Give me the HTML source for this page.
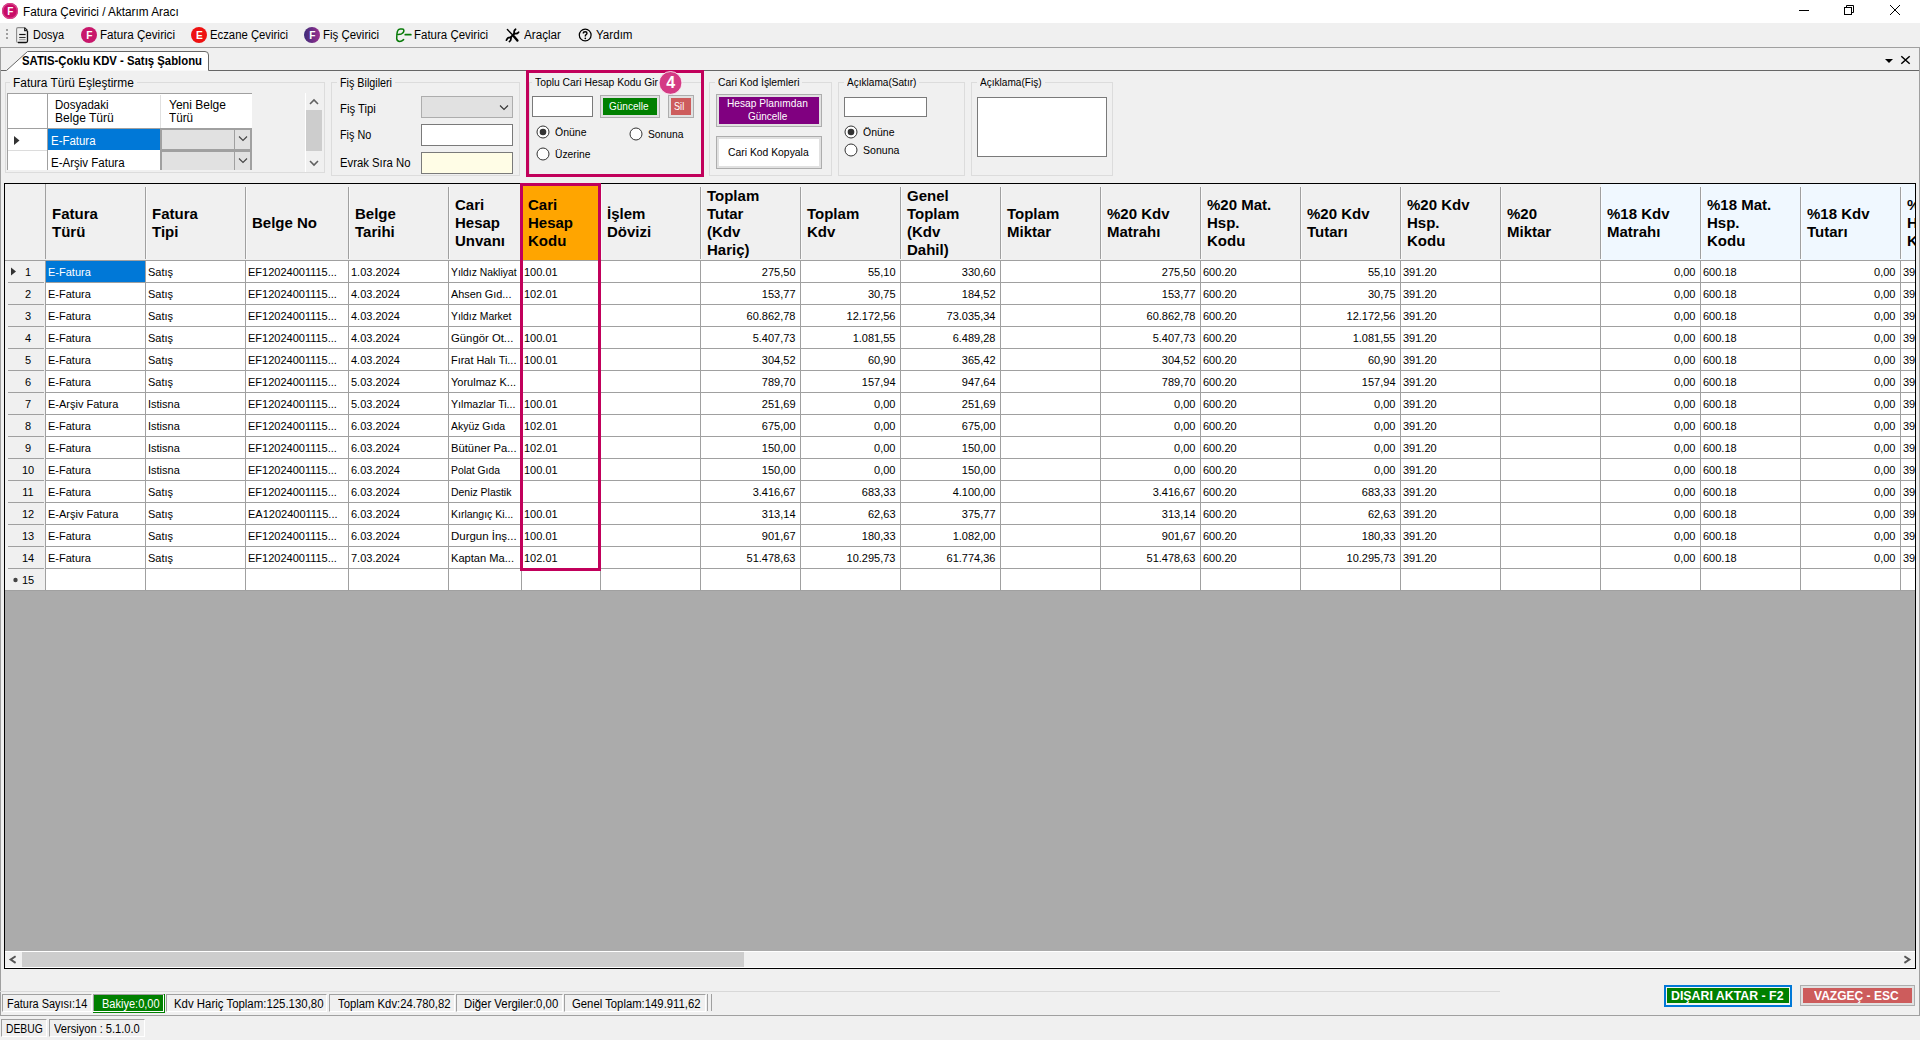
<!DOCTYPE html>
<html><head><meta charset="utf-8"><title>Fatura Çevirici</title>
<style>
html,body{margin:0;padding:0;}
body{width:1920px;height:1040px;overflow:hidden;background:#f0f0f0;position:relative;font-family:'Liberation Sans', sans-serif;color:#000;}
body>div,body>span,body>svg{position:absolute;}
span{white-space:pre;transform-origin:0 0;}
</style></head><body>
<div style="left:0px;top:0px;width:1920px;height:23px;background:#fff;z-index:1"></div>
<svg style="left:2px;top:3px;z-index:3" width="16" height="16"><circle cx="8" cy="8" r="8" fill="#c90b67"/><circle cx="8" cy="8" r="7.4" fill="none" stroke="#d8488c" stroke-width="1.2"/><text x="8.3" y="11.8" fill="#fff" font-family="Liberation Sans" font-weight="bold" font-size="10" text-anchor="middle">F</text></svg>
<svg style="left:1790px;top:0;z-index:3" width="130" height="23" stroke="#000" fill="none" stroke-width="1"><line x1="9" y1="10.5" x2="19" y2="10.5"/><rect x="54.5" y="7.5" width="7" height="7"/><path d="M56.5 7.5 V5.5 H63.5 V12.5 H61.5"/><line x1="100" y1="5" x2="110" y2="15"/><line x1="110" y1="5" x2="100" y2="15"/></svg>
<div style="left:6px;top:29px;width:2px;height:2px;background:#a0a0a0;z-index:1"></div>
<div style="left:6px;top:33px;width:2px;height:2px;background:#a0a0a0;z-index:1"></div>
<div style="left:6px;top:37px;width:2px;height:2px;background:#a0a0a0;z-index:1"></div>
<svg style="left:15px;top:26px;z-index:3" width="16" height="18" fill="none" stroke-width="1.1"><path d="M12.5 5 V15 Q12.5 16.5 11 16.5 H3" stroke="#111" stroke-width="1.3"/><path d="M3 16.5 Q1.6 16.5 1.6 15 V3 Q1.6 1.6 3 1.6 H9.6" stroke="#8a8a8a"/><path d="M9.6 1.6 L12.5 4.5 M9.6 1.6 V4.6 H12.5" stroke="#222"/><line x1="4.2" y1="8.5" x2="10.6" y2="8.5" stroke="#111" stroke-width="1.2"/><line x1="4.2" y1="11.5" x2="10.6" y2="11.5" stroke="#333" stroke-width="1.1"/><line x1="4.2" y1="13.7" x2="10.6" y2="13.7" stroke="#999" stroke-width="1.1"/></svg>
<svg style="left:81px;top:27px;z-index:3" width="16" height="16"><circle cx="8" cy="8" r="8" fill="#c8176b"/><text x="8.4" y="12" fill="#fff" font-family="Liberation Sans" font-weight="bold" font-size="10.2" text-anchor="middle">F</text></svg>
<svg style="left:191px;top:27px;z-index:3" width="16" height="16"><circle cx="8" cy="8" r="8" fill="#ee1111"/><text x="8.4" y="12" fill="#fff" font-family="Liberation Sans" font-weight="bold" font-size="10.2" text-anchor="middle">E</text></svg>
<svg style="left:304px;top:27px;z-index:3" width="16" height="16"><defs><linearGradient id="g304" x1="0" x2="1"><stop offset="0" stop-color="#3d2b7a"/><stop offset="1" stop-color="#9b2f8f"/></linearGradient></defs><circle cx="8" cy="8" r="8" fill="url(#g304)"/><text x="8.4" y="12" fill="#fff" font-family="Liberation Sans" font-weight="bold" font-size="10.2" text-anchor="middle">F</text></svg>
<svg style="left:392px;top:24px;z-index:3" width="22" height="22" fill="none" stroke="#077a07" stroke-width="1.5" stroke-linecap="round" stroke-linejoin="round"><path d="M6.3 10.4 L9.4 9.9 Q11.9 9 11.9 6.6 Q11.9 5.1 10.2 5.1 L8.2 5.1 Q6.1 5.3 5.4 7.4 L4.9 10.2 L4.7 14.6 Q4.9 17.4 7.7 17.4 Q9.7 17.3 11.6 15.6"/><path d="M13.3 10.7 H18.8" stroke-width="1.8"/></svg>
<svg style="left:500px;top:24px;z-index:3" width="24" height="22" fill="none" stroke="#000" stroke-linecap="round"><path d="M7.4 5.6 L12.2 10.4" stroke-width="1.4"/><path d="M13.8 12.2 L17.4 16.6" stroke-width="2.4"/><path d="M10.8 13.4 L14.2 9.6" stroke-width="2"/><path d="M15.6 5.2 Q13.6 6.6 14.2 9.2 Q16.8 10.6 18.6 8.2" stroke-width="1.7"/><path d="M6.4 16.2 Q7.6 13 10.8 13.4 Q11.6 16 9.4 17.6" stroke-width="1.7"/></svg>
<svg style="left:574px;top:24px;z-index:3" width="22" height="22" fill="none" stroke="#000" stroke-width="1.15"><circle cx="11.2" cy="11" r="5.9" stroke-width="1.25"/><path d="M9.3 9.4 Q9.3 7.8 11.2 7.8 Q13 7.8 13 9.3 Q13 10.3 11.5 11.2 L11.3 12.5" stroke-width="1.4"/><circle cx="11.3" cy="14.3" r="0.85" fill="#000" stroke="none"/></svg>
<div style="left:0px;top:47px;width:1920px;height:1px;background:#a0a0a0;z-index:1"></div>
<div style="left:0px;top:47px;width:1px;height:969px;background:#a0a0a0;z-index:1"></div>
<div style="left:1919px;top:47px;width:1px;height:969px;background:#a0a0a0;z-index:1"></div>
<div style="left:0px;top:1015px;width:1920px;height:1px;background:#a0a0a0;z-index:1"></div>
<svg style="left:0;top:48px;z-index:2" width="1920" height="24"><path d="M6 22.5 L27 3.5 H205 Q208.5 3.5 208.5 7 V22.5 Z" fill="#fff"/><path d="M1 22.5 H6.5 L27.5 3.5 H205 Q208.5 3.5 208.5 7 V22.5 H1919" fill="none" stroke="#666" stroke-width="1"/></svg>
<svg style="left:1880px;top:54px;z-index:3" width="36" height="14"><path d="M5 5 H13 L9 9 Z" fill="#000"/><path d="M21.3 2.3 L29.7 9.7 M29.7 2.3 L21.3 9.7" stroke="#000" stroke-width="1.5"/></svg>
<div style="left:5px;top:82px;width:320px;height:91px;border:1px solid #dcdcdc;box-sizing:border-box;z-index:1"></div>
<div style="left:10px;top:81px;width:127px;height:3px;background:#f0f0f0;z-index:2"></div>
<div style="left:331px;top:82px;width:189px;height:94px;border:1px solid #dcdcdc;box-sizing:border-box;z-index:1"></div>
<div style="left:337px;top:81px;width:58px;height:3px;background:#f0f0f0;z-index:2"></div>
<div style="left:529px;top:82px;width:173px;height:93px;border:1px solid #dcdcdc;box-sizing:border-box;z-index:1"></div>
<div style="left:532px;top:81px;width:129px;height:3px;background:#f0f0f0;z-index:2"></div>
<div style="left:709px;top:82px;width:123px;height:94px;border:1px solid #dcdcdc;box-sizing:border-box;z-index:1"></div>
<div style="left:715px;top:81px;width:87.4px;height:3px;background:#f0f0f0;z-index:2"></div>
<div style="left:838px;top:82px;width:127px;height:94px;border:1px solid #dcdcdc;box-sizing:border-box;z-index:1"></div>
<div style="left:844px;top:81px;width:75.4px;height:3px;background:#f0f0f0;z-index:2"></div>
<div style="left:971px;top:82px;width:142px;height:94px;border:1px solid #dcdcdc;box-sizing:border-box;z-index:1"></div>
<div style="left:977px;top:81px;width:67.5px;height:3px;background:#f0f0f0;z-index:2"></div>
<div style="left:7px;top:93px;width:245px;height:77px;background:#fff;z-index:2"></div>
<div style="left:7px;top:93px;width:245px;height:1px;background:#a0a0a0;z-index:3"></div>
<div style="left:7px;top:93px;width:1px;height:77px;background:#a0a0a0;z-index:3"></div>
<div style="left:47px;top:93px;width:1px;height:77px;background:#a0a0a0;z-index:3"></div>
<div style="left:160px;top:95px;width:1px;height:33px;background:#e0e0e0;z-index:3"></div>
<div style="left:7px;top:128px;width:245px;height:1px;background:#a0a0a0;z-index:3"></div>
<div style="left:8px;top:150px;width:39px;height:1px;background:#dcdcdc;z-index:3"></div>
<div style="left:48px;top:129px;width:112px;height:21px;background:#0078d7;z-index:3"></div>
<svg style="left:13px;top:135px;z-index:4" width="8" height="12"><path d="M1 1 L6.5 5.5 L1 10 Z" fill="#333"/></svg>
<div style="left:48px;top:151px;width:112px;height:19px;background:#fff;z-index:3"></div>
<div style="left:160px;top:129px;width:92px;height:21px;background:#e1e1e1;border:2px solid #a0a0a0;border-top:1px solid #a0a0a0;border-bottom:none;box-sizing:border-box;z-index:3"></div>
<div style="left:234px;top:129px;width:1px;height:21px;background:#a0a0a0;z-index:4"></div>
<svg style="left:238px;top:135px;z-index:5" width="10" height="8"><path d="M1 1.5 L5 5.5 L9 1.5" fill="none" stroke="#444" stroke-width="1.1"/></svg>
<div style="left:160px;top:151px;width:92px;height:19px;background:#e1e1e1;border:2px solid #a0a0a0;border-top:1px solid #a0a0a0;border-bottom:none;box-sizing:border-box;z-index:3"></div>
<div style="left:234px;top:151px;width:1px;height:19px;background:#a0a0a0;z-index:4"></div>
<svg style="left:238px;top:157px;z-index:5" width="10" height="8"><path d="M1 1.5 L5 5.5 L9 1.5" fill="none" stroke="#444" stroke-width="1.1"/></svg>
<div style="left:160px;top:149px;width:92px;height:2px;background:#a0a0a0;z-index:4"></div>
<div style="left:305px;top:93px;width:16px;height:79px;background:#f0f0f0;border-left:1px solid #fff;box-sizing:border-box;z-index:2"></div>
<div style="left:306px;top:110px;width:16px;height:41px;background:#cdcdcd;z-index:3"></div>
<svg style="left:306px;top:98px;z-index:4" width="16" height="8"><path d="M4 6 L8 2 L12 6" fill="none" stroke="#606060" stroke-width="1.6"/></svg>
<svg style="left:306px;top:159px;z-index:4" width="16" height="8"><path d="M4 2 L8 6 L12 2" fill="none" stroke="#606060" stroke-width="1.6"/></svg>
<div style="left:421px;top:96px;width:92px;height:22px;background:#e1e1e1;border:1px solid #adadad;box-sizing:border-box;z-index:3"></div>
<svg style="left:499px;top:104px;z-index:4" width="10" height="8"><path d="M1 1.5 L5 5.5 L9 1.5" fill="none" stroke="#333" stroke-width="1.1"/></svg>
<div style="left:421px;top:124px;width:92px;height:22px;background:#fff;border:1px solid #7a7a7a;box-sizing:border-box;z-index:3"></div>
<div style="left:421px;top:152px;width:92px;height:22px;background:#fffde6;border:1px solid #7a7a7a;box-sizing:border-box;z-index:3"></div>
<div style="left:532px;top:96px;width:61px;height:21px;background:#fff;border:1px solid #7a7a7a;box-sizing:border-box;z-index:3"></div>
<div style="left:600px;top:95px;width:60px;height:23px;background:#e1e1e1;border:1px solid #adadad;box-sizing:border-box;z-index:3"></div>
<div style="left:603px;top:98px;width:54px;height:17px;background:#008000;z-index:4"></div>
<div style="left:668px;top:95px;width:26px;height:23px;background:#e1e1e1;border:1px solid #adadad;box-sizing:border-box;z-index:3"></div>
<div style="left:671px;top:98px;width:20px;height:17px;background:#cd5c5c;z-index:4"></div>
<svg style="left:535.5px;top:124.5px;z-index:4" width="14" height="14"><circle cx="7" cy="7" r="6" fill="#fff" stroke="#333" stroke-width="1"/><circle cx="7" cy="7" r="3.3" fill="#333"/></svg>
<svg style="left:628.5px;top:126.5px;z-index:4" width="14" height="14"><circle cx="7" cy="7" r="6" fill="#fff" stroke="#333" stroke-width="1"/></svg>
<svg style="left:535.5px;top:146.5px;z-index:4" width="14" height="14"><circle cx="7" cy="7" r="6" fill="#fff" stroke="#333" stroke-width="1"/></svg>
<div style="left:526px;top:70px;width:178px;height:107px;border:3px solid #c1005b;box-sizing:border-box;z-index:7"></div>
<svg style="left:658px;top:70px;z-index:8" width="25" height="25"><circle cx="12.5" cy="12.9" r="11.4" fill="#d43a84" stroke="#fff" stroke-width="0.8"/><text x="12.6" y="18.4" fill="#fff" font-family="Liberation Sans" font-weight="bold" font-size="16" text-anchor="middle">4</text></svg>
<div style="left:716px;top:94px;width:106px;height:33px;background:#e1e1e1;border:1px solid #adadad;box-sizing:border-box;z-index:3"></div>
<div style="left:719px;top:97px;width:100px;height:27px;background:#800080;z-index:4"></div>
<div style="left:716px;top:136px;width:106px;height:33px;background:#e1e1e1;border:1px solid #adadad;box-sizing:border-box;z-index:3"></div>
<div style="left:719px;top:139px;width:100px;height:27px;background:#fff;z-index:4"></div>
<div style="left:844px;top:97px;width:83px;height:20px;background:#fff;border:1px solid #7a7a7a;box-sizing:border-box;z-index:3"></div>
<svg style="left:843.5px;top:124.5px;z-index:4" width="14" height="14"><circle cx="7" cy="7" r="6" fill="#fff" stroke="#333" stroke-width="1"/><circle cx="7" cy="7" r="3.3" fill="#333"/></svg>
<svg style="left:843.5px;top:142.5px;z-index:4" width="14" height="14"><circle cx="7" cy="7" r="6" fill="#fff" stroke="#333" stroke-width="1"/></svg>
<div style="left:977px;top:97px;width:130px;height:60px;background:#fff;border:1px solid #7a7a7a;box-sizing:border-box;z-index:3"></div>
<div style="left:4px;top:183px;width:1912px;height:786px;background:#fff;border:1px solid #000;box-sizing:border-box;z-index:1"></div>
<div style="left:5px;top:184px;width:1910px;height:76px;background:#f0f0f0;z-index:2"></div>
<div style="left:1601px;top:184px;width:314px;height:76px;background:#f0f8ff;z-index:2"></div>
<div style="left:523px;top:186px;width:75px;height:74px;background:#ffa500;z-index:2"></div>
<div style="left:5px;top:261px;width:40px;height:330px;background:#f0f0f0;z-index:2"></div>
<div style="left:46px;top:261px;width:99px;height:21px;background:#0078d7;z-index:3"></div>
<div style="left:45px;top:184px;width:1px;height:75px;background:#a0a0a0;z-index:3"></div>
<div style="left:45px;top:261px;width:1px;height:330px;background:#a0a0a0;z-index:3"></div>
<div style="left:145px;top:187px;width:1px;height:72px;background:#a0a0a0;z-index:3"></div>
<div style="left:146px;top:187px;width:1px;height:72px;background:#fff;opacity:.6;z-index:3"></div>
<div style="left:145px;top:261px;width:1px;height:330px;background:#a0a0a0;z-index:3"></div>
<div style="left:245px;top:187px;width:1px;height:72px;background:#a0a0a0;z-index:3"></div>
<div style="left:246px;top:187px;width:1px;height:72px;background:#fff;opacity:.6;z-index:3"></div>
<div style="left:245px;top:261px;width:1px;height:330px;background:#a0a0a0;z-index:3"></div>
<div style="left:348px;top:187px;width:1px;height:72px;background:#a0a0a0;z-index:3"></div>
<div style="left:349px;top:187px;width:1px;height:72px;background:#fff;opacity:.6;z-index:3"></div>
<div style="left:348px;top:261px;width:1px;height:330px;background:#a0a0a0;z-index:3"></div>
<div style="left:448px;top:187px;width:1px;height:72px;background:#a0a0a0;z-index:3"></div>
<div style="left:449px;top:187px;width:1px;height:72px;background:#fff;opacity:.6;z-index:3"></div>
<div style="left:448px;top:261px;width:1px;height:330px;background:#a0a0a0;z-index:3"></div>
<div style="left:521px;top:187px;width:1px;height:72px;background:#a0a0a0;z-index:3"></div>
<div style="left:522px;top:187px;width:1px;height:72px;background:#fff;opacity:.6;z-index:3"></div>
<div style="left:521px;top:261px;width:1px;height:330px;background:#a0a0a0;z-index:3"></div>
<div style="left:600px;top:187px;width:1px;height:72px;background:#a0a0a0;z-index:3"></div>
<div style="left:601px;top:187px;width:1px;height:72px;background:#fff;opacity:.6;z-index:3"></div>
<div style="left:600px;top:261px;width:1px;height:330px;background:#a0a0a0;z-index:3"></div>
<div style="left:700px;top:187px;width:1px;height:72px;background:#a0a0a0;z-index:3"></div>
<div style="left:701px;top:187px;width:1px;height:72px;background:#fff;opacity:.6;z-index:3"></div>
<div style="left:700px;top:261px;width:1px;height:330px;background:#a0a0a0;z-index:3"></div>
<div style="left:800px;top:187px;width:1px;height:72px;background:#a0a0a0;z-index:3"></div>
<div style="left:801px;top:187px;width:1px;height:72px;background:#fff;opacity:.6;z-index:3"></div>
<div style="left:800px;top:261px;width:1px;height:330px;background:#a0a0a0;z-index:3"></div>
<div style="left:900px;top:187px;width:1px;height:72px;background:#a0a0a0;z-index:3"></div>
<div style="left:901px;top:187px;width:1px;height:72px;background:#fff;opacity:.6;z-index:3"></div>
<div style="left:900px;top:261px;width:1px;height:330px;background:#a0a0a0;z-index:3"></div>
<div style="left:1000px;top:187px;width:1px;height:72px;background:#a0a0a0;z-index:3"></div>
<div style="left:1001px;top:187px;width:1px;height:72px;background:#fff;opacity:.6;z-index:3"></div>
<div style="left:1000px;top:261px;width:1px;height:330px;background:#a0a0a0;z-index:3"></div>
<div style="left:1100px;top:187px;width:1px;height:72px;background:#a0a0a0;z-index:3"></div>
<div style="left:1101px;top:187px;width:1px;height:72px;background:#fff;opacity:.6;z-index:3"></div>
<div style="left:1100px;top:261px;width:1px;height:330px;background:#a0a0a0;z-index:3"></div>
<div style="left:1200px;top:187px;width:1px;height:72px;background:#a0a0a0;z-index:3"></div>
<div style="left:1201px;top:187px;width:1px;height:72px;background:#fff;opacity:.6;z-index:3"></div>
<div style="left:1200px;top:261px;width:1px;height:330px;background:#a0a0a0;z-index:3"></div>
<div style="left:1300px;top:187px;width:1px;height:72px;background:#a0a0a0;z-index:3"></div>
<div style="left:1301px;top:187px;width:1px;height:72px;background:#fff;opacity:.6;z-index:3"></div>
<div style="left:1300px;top:261px;width:1px;height:330px;background:#a0a0a0;z-index:3"></div>
<div style="left:1400px;top:187px;width:1px;height:72px;background:#a0a0a0;z-index:3"></div>
<div style="left:1401px;top:187px;width:1px;height:72px;background:#fff;opacity:.6;z-index:3"></div>
<div style="left:1400px;top:261px;width:1px;height:330px;background:#a0a0a0;z-index:3"></div>
<div style="left:1500px;top:187px;width:1px;height:72px;background:#a0a0a0;z-index:3"></div>
<div style="left:1501px;top:187px;width:1px;height:72px;background:#fff;opacity:.6;z-index:3"></div>
<div style="left:1500px;top:261px;width:1px;height:330px;background:#a0a0a0;z-index:3"></div>
<div style="left:1600px;top:187px;width:1px;height:72px;background:#a0a0a0;z-index:3"></div>
<div style="left:1601px;top:187px;width:1px;height:72px;background:#fff;opacity:.6;z-index:3"></div>
<div style="left:1600px;top:261px;width:1px;height:330px;background:#a0a0a0;z-index:3"></div>
<div style="left:1700px;top:187px;width:1px;height:72px;background:#a0a0a0;z-index:3"></div>
<div style="left:1701px;top:187px;width:1px;height:72px;background:#fff;opacity:.6;z-index:3"></div>
<div style="left:1700px;top:261px;width:1px;height:330px;background:#a0a0a0;z-index:3"></div>
<div style="left:1800px;top:187px;width:1px;height:72px;background:#a0a0a0;z-index:3"></div>
<div style="left:1801px;top:187px;width:1px;height:72px;background:#fff;opacity:.6;z-index:3"></div>
<div style="left:1800px;top:261px;width:1px;height:330px;background:#a0a0a0;z-index:3"></div>
<div style="left:1900px;top:187px;width:1px;height:72px;background:#a0a0a0;z-index:3"></div>
<div style="left:1901px;top:187px;width:1px;height:72px;background:#fff;opacity:.6;z-index:3"></div>
<div style="left:1900px;top:261px;width:1px;height:330px;background:#a0a0a0;z-index:3"></div>
<div style="left:5px;top:260px;width:1910px;height:1px;background:#a0a0a0;z-index:3"></div>
<div style="left:45px;top:282px;width:1870px;height:1px;background:#a0a0a0;z-index:3"></div>
<div style="left:8px;top:282px;width:36px;height:1px;background:#a0a0a0;z-index:3"></div>
<div style="left:45px;top:304px;width:1870px;height:1px;background:#a0a0a0;z-index:3"></div>
<div style="left:8px;top:304px;width:36px;height:1px;background:#a0a0a0;z-index:3"></div>
<div style="left:45px;top:326px;width:1870px;height:1px;background:#a0a0a0;z-index:3"></div>
<div style="left:8px;top:326px;width:36px;height:1px;background:#a0a0a0;z-index:3"></div>
<div style="left:45px;top:348px;width:1870px;height:1px;background:#a0a0a0;z-index:3"></div>
<div style="left:8px;top:348px;width:36px;height:1px;background:#a0a0a0;z-index:3"></div>
<div style="left:45px;top:370px;width:1870px;height:1px;background:#a0a0a0;z-index:3"></div>
<div style="left:8px;top:370px;width:36px;height:1px;background:#a0a0a0;z-index:3"></div>
<div style="left:45px;top:392px;width:1870px;height:1px;background:#a0a0a0;z-index:3"></div>
<div style="left:8px;top:392px;width:36px;height:1px;background:#a0a0a0;z-index:3"></div>
<div style="left:45px;top:414px;width:1870px;height:1px;background:#a0a0a0;z-index:3"></div>
<div style="left:8px;top:414px;width:36px;height:1px;background:#a0a0a0;z-index:3"></div>
<div style="left:45px;top:436px;width:1870px;height:1px;background:#a0a0a0;z-index:3"></div>
<div style="left:8px;top:436px;width:36px;height:1px;background:#a0a0a0;z-index:3"></div>
<div style="left:45px;top:458px;width:1870px;height:1px;background:#a0a0a0;z-index:3"></div>
<div style="left:8px;top:458px;width:36px;height:1px;background:#a0a0a0;z-index:3"></div>
<div style="left:45px;top:480px;width:1870px;height:1px;background:#a0a0a0;z-index:3"></div>
<div style="left:8px;top:480px;width:36px;height:1px;background:#a0a0a0;z-index:3"></div>
<div style="left:45px;top:502px;width:1870px;height:1px;background:#a0a0a0;z-index:3"></div>
<div style="left:8px;top:502px;width:36px;height:1px;background:#a0a0a0;z-index:3"></div>
<div style="left:45px;top:524px;width:1870px;height:1px;background:#a0a0a0;z-index:3"></div>
<div style="left:8px;top:524px;width:36px;height:1px;background:#a0a0a0;z-index:3"></div>
<div style="left:45px;top:546px;width:1870px;height:1px;background:#a0a0a0;z-index:3"></div>
<div style="left:8px;top:546px;width:36px;height:1px;background:#a0a0a0;z-index:3"></div>
<div style="left:45px;top:568px;width:1870px;height:1px;background:#a0a0a0;z-index:3"></div>
<div style="left:8px;top:568px;width:36px;height:1px;background:#a0a0a0;z-index:3"></div>
<div style="left:5px;top:590px;width:1910px;height:1px;background:#a0a0a0;z-index:3"></div>
<div style="left:5px;top:591px;width:1910px;height:360px;background:#ababab;z-index:3"></div>
<div style="left:5px;top:951px;width:1910px;height:17px;background:#f0f0f0;border-top:1px solid #fff;border-bottom:1px solid #fff;box-sizing:border-box;z-index:3"></div>
<div style="left:22px;top:952px;width:722px;height:15px;background:#cdcdcd;z-index:4"></div>
<svg style="left:8px;top:954px;z-index:5" width="10" height="12"><path d="M7.6 2.3 L2.6 5.6 L7.6 8.9" fill="none" stroke="#555" stroke-width="1.9"/></svg>
<svg style="left:1902px;top:954px;z-index:5" width="10" height="12"><path d="M2.4 2.3 L7.4 5.6 L2.4 8.9" fill="none" stroke="#555" stroke-width="1.9"/></svg>
<svg style="left:10px;top:267px;z-index:6" width="8" height="10"><path d="M1 0.5 L6 4.5 L1 8.5 Z" fill="#333"/></svg>
<svg style="left:12px;top:576px;z-index:6" width="8" height="8"><circle cx="3.5" cy="4" r="2.2" fill="#444"/></svg>
<div style="left:1916px;top:183px;width:3px;height:786px;background:#f0f0f0;z-index:9"></div>
<div style="left:1915px;top:183px;width:1px;height:786px;background:#000;z-index:10"></div>
<div style="left:1919px;top:47px;width:1px;height:969px;background:#a0a0a0;z-index:10"></div>
<div style="left:520px;top:183px;width:81px;height:388px;border:3px solid #c1005b;box-sizing:border-box;z-index:8"></div>
<div style="left:0px;top:991px;width:1500px;height:1px;background:#d8d8d8;z-index:2"></div>
<div style="left:2px;top:994px;width:90px;height:18px;border-top:1px solid #a0a0a0;border-left:1px solid #a0a0a0;border-bottom:1px solid #fff;border-right:1px solid #fff;box-sizing:border-box;z-index:3"></div>
<div style="left:93px;top:994px;width:73px;height:17px;background:#008000;border-top:1px solid #a0a0a0;border-left:1px solid #a0a0a0;box-sizing:border-box;z-index:3"></div>
<div style="left:93px;top:1011px;width:73px;height:1px;background:#fff;z-index:3"></div>
<div style="left:93px;top:1012px;width:73px;height:1px;background:#008000;z-index:3"></div>
<div style="left:163px;top:995px;width:1px;height:17px;background:#fff;z-index:4"></div>
<div style="left:164px;top:994px;width:1px;height:19px;background:#008000;z-index:4"></div>
<div style="left:165px;top:994px;width:1px;height:19px;background:#f0f0f0;z-index:4"></div>
<div style="left:166px;top:994px;width:161px;height:18px;border-top:1px solid #a0a0a0;border-left:1px solid #a0a0a0;border-bottom:1px solid #fff;border-right:1px solid #fff;box-sizing:border-box;z-index:3"></div>
<div style="left:329px;top:994px;width:126px;height:18px;border-top:1px solid #a0a0a0;border-left:1px solid #a0a0a0;border-bottom:1px solid #fff;border-right:1px solid #fff;box-sizing:border-box;z-index:3"></div>
<div style="left:456px;top:994px;width:107px;height:18px;border-top:1px solid #a0a0a0;border-left:1px solid #a0a0a0;border-bottom:1px solid #fff;border-right:1px solid #fff;box-sizing:border-box;z-index:3"></div>
<div style="left:564px;top:994px;width:142px;height:18px;border-top:1px solid #a0a0a0;border-left:1px solid #a0a0a0;border-bottom:1px solid #fff;border-right:1px solid #fff;box-sizing:border-box;z-index:3"></div>
<div style="left:707px;top:994px;width:1px;height:17px;background:#a0a0a0;z-index:3"></div>
<div style="left:711px;top:994px;width:1px;height:17px;background:#a0a0a0;z-index:3"></div>
<div style="left:1664px;top:985px;width:128px;height:22px;border:2px solid #0078d7;background:#f5f5f5;box-sizing:border-box;z-index:3"></div>
<div style="left:1667px;top:988px;width:122px;height:15px;background:#008000;z-index:4"></div>
<div style="left:1800px;top:985px;width:115px;height:21px;border:1px solid #adadad;background:#e1e1e1;box-sizing:border-box;z-index:3"></div>
<div style="left:1803px;top:988px;width:109px;height:15px;background:#cd5c5c;z-index:4"></div>
<div style="left:1px;top:1019px;width:46px;height:18px;border-top:1px solid #a0a0a0;border-left:1px solid #a0a0a0;border-bottom:1px solid #fff;border-right:1px solid #fff;box-sizing:border-box;z-index:3"></div>
<div style="left:49px;top:1019px;width:96px;height:18px;border-top:1px solid #a0a0a0;border-left:1px solid #a0a0a0;border-bottom:1px solid #fff;border-right:1px solid #fff;box-sizing:border-box;z-index:3"></div>
<span style="left:23.00px;top:4.84px;font-size:12px;line-height:14px;z-index:5;transform:scaleX(0.981)">Fatura Çevirici / Aktarım Aracı</span>
<span style="left:33.00px;top:27.84px;font-size:12px;line-height:14px;z-index:5;transform:scaleX(0.911)">Dosya</span>
<span style="left:100.00px;top:27.84px;font-size:12px;line-height:14px;z-index:5;transform:scaleX(0.970)">Fatura Çevirici</span>
<span style="left:210.00px;top:27.84px;font-size:12px;line-height:14px;z-index:5;transform:scaleX(0.943)">Eczane Çevirici</span>
<span style="left:323.00px;top:27.84px;font-size:12px;line-height:14px;z-index:5;transform:scaleX(0.955)">Fiş Çevirici</span>
<span style="left:414.00px;top:27.84px;font-size:12px;line-height:14px;z-index:5;transform:scaleX(0.957)">Fatura Çevirici</span>
<span style="left:524.00px;top:27.84px;font-size:12px;line-height:14px;z-index:5;transform:scaleX(0.973)">Araçlar</span>
<span style="left:596.00px;top:27.84px;font-size:12px;line-height:14px;z-index:5;transform:scaleX(0.966)">Yardım</span>
<span style="left:22.00px;top:53.84px;font-size:12px;line-height:14px;z-index:5;transform:scaleX(0.945);font-weight:bold">SATIS-Çoklu KDV - Satış Şablonu</span>
<span style="left:13.00px;top:75.84px;font-size:12px;line-height:14px;z-index:6;transform:scaleX(0.992)">Fatura Türü Eşleştirme</span>
<span style="left:340.00px;top:75.84px;font-size:12px;line-height:14px;z-index:6;transform:scaleX(0.896)">Fiş Bilgileri</span>
<span style="left:535.00px;top:75.69px;font-size:11px;line-height:13px;z-index:6;transform:scaleX(0.940)">Toplu Cari Hesap Kodu Gir</span>
<span style="left:718.00px;top:75.69px;font-size:11px;line-height:13px;z-index:6;transform:scaleX(0.938)">Cari Kod İşlemleri</span>
<span style="left:847.00px;top:75.69px;font-size:11px;line-height:13px;z-index:6;transform:scaleX(0.916)">Açıklama(Satır)</span>
<span style="left:980.00px;top:75.69px;font-size:11px;line-height:13px;z-index:6;transform:scaleX(0.915)">Açıklama(Fiş)</span>
<span style="left:55.00px;top:97.84px;font-size:12px;line-height:14px;z-index:5;transform:scaleX(0.955)">Dosyadaki</span>
<span style="left:55.00px;top:110.84px;font-size:12px;line-height:14px;z-index:5;transform:scaleX(1.005)">Belge Türü</span>
<span style="left:169.00px;top:97.84px;font-size:12px;line-height:14px;z-index:5">Yeni Belge</span>
<span style="left:169.00px;top:110.84px;font-size:12px;line-height:14px;z-index:5;transform:scaleX(0.973)">Türü</span>
<span style="left:51.00px;top:133.84px;font-size:12px;line-height:14px;z-index:5;transform:scaleX(0.953);color:#fff">E-Fatura</span>
<span style="left:51.00px;top:155.84px;font-size:12px;line-height:14px;z-index:5;transform:scaleX(0.960)">E-Arşiv Fatura</span>
<span style="left:340.00px;top:101.84px;font-size:12px;line-height:14px;z-index:5;transform:scaleX(0.942)">Fiş Tipi</span>
<span style="left:340.00px;top:127.84px;font-size:12px;line-height:14px;z-index:5;transform:scaleX(0.900)">Fiş No</span>
<span style="left:340.00px;top:155.84px;font-size:12px;line-height:14px;z-index:5;transform:scaleX(0.943)">Evrak Sıra No</span>
<span style="left:608.70px;top:100.19px;font-size:11px;line-height:13px;z-index:5;transform:scaleX(0.910);color:#fff">Güncelle</span>
<span style="left:674.30px;top:100.19px;font-size:11px;line-height:13px;z-index:5;transform:scaleX(0.834);color:#fff">Sil</span>
<span style="left:554.70px;top:125.69px;font-size:11px;line-height:13px;z-index:5;transform:scaleX(0.954)">Önüne</span>
<span style="left:647.50px;top:127.69px;font-size:11px;line-height:13px;z-index:5;transform:scaleX(0.936)">Sonuna</span>
<span style="left:554.70px;top:147.69px;font-size:11px;line-height:13px;z-index:5;transform:scaleX(0.934)">Üzerine</span>
<span style="left:727.40px;top:97.19px;font-size:11px;line-height:13px;z-index:5;transform:scaleX(0.924);color:#fff">Hesap Planımdan</span>
<span style="left:747.80px;top:109.69px;font-size:11px;line-height:13px;z-index:5;transform:scaleX(0.905);color:#fff">Güncelle</span>
<span style="left:727.60px;top:145.69px;font-size:11px;line-height:13px;z-index:5;transform:scaleX(0.942)">Cari Kod Kopyala</span>
<span style="left:862.70px;top:125.69px;font-size:11px;line-height:13px;z-index:5;transform:scaleX(0.954)">Önüne</span>
<span style="left:862.70px;top:143.69px;font-size:11px;line-height:13px;z-index:5;transform:scaleX(0.960)">Sonuna</span>
<span style="left:52.00px;top:204.80px;font-size:15px;line-height:17px;z-index:6;font-weight:bold">Fatura</span>
<span style="left:52.00px;top:222.80px;font-size:15px;line-height:17px;z-index:6;font-weight:bold">Türü</span>
<span style="left:152.00px;top:204.80px;font-size:15px;line-height:17px;z-index:6;font-weight:bold">Fatura</span>
<span style="left:152.00px;top:222.80px;font-size:15px;line-height:17px;z-index:6;font-weight:bold">Tipi</span>
<span style="left:252.00px;top:213.80px;font-size:15px;line-height:17px;z-index:6;font-weight:bold">Belge No</span>
<span style="left:355.00px;top:204.80px;font-size:15px;line-height:17px;z-index:6;font-weight:bold">Belge</span>
<span style="left:355.00px;top:222.80px;font-size:15px;line-height:17px;z-index:6;font-weight:bold">Tarihi</span>
<span style="left:455.00px;top:195.80px;font-size:15px;line-height:17px;z-index:6;font-weight:bold">Cari</span>
<span style="left:455.00px;top:213.80px;font-size:15px;line-height:17px;z-index:6;font-weight:bold">Hesap</span>
<span style="left:455.00px;top:231.80px;font-size:15px;line-height:17px;z-index:6;font-weight:bold">Unvanı</span>
<span style="left:528.00px;top:195.80px;font-size:15px;line-height:17px;z-index:6;font-weight:bold">Cari</span>
<span style="left:528.00px;top:213.80px;font-size:15px;line-height:17px;z-index:6;font-weight:bold">Hesap</span>
<span style="left:528.00px;top:231.80px;font-size:15px;line-height:17px;z-index:6;font-weight:bold">Kodu</span>
<span style="left:607.00px;top:204.80px;font-size:15px;line-height:17px;z-index:6;font-weight:bold">İşlem</span>
<span style="left:607.00px;top:222.80px;font-size:15px;line-height:17px;z-index:6;font-weight:bold">Dövizi</span>
<span style="left:707.00px;top:186.80px;font-size:15px;line-height:17px;z-index:6;font-weight:bold">Toplam</span>
<span style="left:707.00px;top:204.80px;font-size:15px;line-height:17px;z-index:6;font-weight:bold">Tutar</span>
<span style="left:707.00px;top:222.80px;font-size:15px;line-height:17px;z-index:6;font-weight:bold">(Kdv</span>
<span style="left:707.00px;top:240.80px;font-size:15px;line-height:17px;z-index:6;font-weight:bold">Hariç)</span>
<span style="left:807.00px;top:204.80px;font-size:15px;line-height:17px;z-index:6;font-weight:bold">Toplam</span>
<span style="left:807.00px;top:222.80px;font-size:15px;line-height:17px;z-index:6;font-weight:bold">Kdv</span>
<span style="left:907.00px;top:186.80px;font-size:15px;line-height:17px;z-index:6;font-weight:bold">Genel</span>
<span style="left:907.00px;top:204.80px;font-size:15px;line-height:17px;z-index:6;font-weight:bold">Toplam</span>
<span style="left:907.00px;top:222.80px;font-size:15px;line-height:17px;z-index:6;font-weight:bold">(Kdv</span>
<span style="left:907.00px;top:240.80px;font-size:15px;line-height:17px;z-index:6;font-weight:bold">Dahil)</span>
<span style="left:1007.00px;top:204.80px;font-size:15px;line-height:17px;z-index:6;font-weight:bold">Toplam</span>
<span style="left:1007.00px;top:222.80px;font-size:15px;line-height:17px;z-index:6;font-weight:bold">Miktar</span>
<span style="left:1107.00px;top:204.80px;font-size:15px;line-height:17px;z-index:6;font-weight:bold">%20 Kdv</span>
<span style="left:1107.00px;top:222.80px;font-size:15px;line-height:17px;z-index:6;font-weight:bold">Matrahı</span>
<span style="left:1207.00px;top:195.80px;font-size:15px;line-height:17px;z-index:6;font-weight:bold">%20 Mat.</span>
<span style="left:1207.00px;top:213.80px;font-size:15px;line-height:17px;z-index:6;font-weight:bold">Hsp.</span>
<span style="left:1207.00px;top:231.80px;font-size:15px;line-height:17px;z-index:6;font-weight:bold">Kodu</span>
<span style="left:1307.00px;top:204.80px;font-size:15px;line-height:17px;z-index:6;font-weight:bold">%20 Kdv</span>
<span style="left:1307.00px;top:222.80px;font-size:15px;line-height:17px;z-index:6;font-weight:bold">Tutarı</span>
<span style="left:1407.00px;top:195.80px;font-size:15px;line-height:17px;z-index:6;font-weight:bold">%20 Kdv</span>
<span style="left:1407.00px;top:213.80px;font-size:15px;line-height:17px;z-index:6;font-weight:bold">Hsp.</span>
<span style="left:1407.00px;top:231.80px;font-size:15px;line-height:17px;z-index:6;font-weight:bold">Kodu</span>
<span style="left:1507.00px;top:204.80px;font-size:15px;line-height:17px;z-index:6;font-weight:bold">%20</span>
<span style="left:1507.00px;top:222.80px;font-size:15px;line-height:17px;z-index:6;font-weight:bold">Miktar</span>
<span style="left:1607.00px;top:204.80px;font-size:15px;line-height:17px;z-index:6;font-weight:bold">%18 Kdv</span>
<span style="left:1607.00px;top:222.80px;font-size:15px;line-height:17px;z-index:6;font-weight:bold">Matrahı</span>
<span style="left:1707.00px;top:195.80px;font-size:15px;line-height:17px;z-index:6;font-weight:bold">%18 Mat.</span>
<span style="left:1707.00px;top:213.80px;font-size:15px;line-height:17px;z-index:6;font-weight:bold">Hsp.</span>
<span style="left:1707.00px;top:231.80px;font-size:15px;line-height:17px;z-index:6;font-weight:bold">Kodu</span>
<span style="left:1807.00px;top:204.80px;font-size:15px;line-height:17px;z-index:6;font-weight:bold">%18 Kdv</span>
<span style="left:1807.00px;top:222.80px;font-size:15px;line-height:17px;z-index:6;font-weight:bold">Tutarı</span>
<span style="left:1907.00px;top:195.80px;font-size:15px;line-height:17px;z-index:6;font-weight:bold">%18</span>
<span style="left:1907.00px;top:213.80px;font-size:15px;line-height:17px;z-index:6;font-weight:bold">Hsp.</span>
<span style="left:1907.00px;top:231.80px;font-size:15px;line-height:17px;z-index:6;font-weight:bold">Kodu</span>
<span style="left:48.00px;top:265.69px;font-size:11px;line-height:13px;z-index:6;color:#fff">E-Fatura</span>
<span style="left:148.00px;top:265.69px;font-size:11px;line-height:13px;z-index:6">Satış</span>
<span style="left:248.00px;top:265.69px;font-size:11px;line-height:13px;z-index:6">EF12024001115...</span>
<span style="left:351.00px;top:265.69px;font-size:11px;line-height:13px;z-index:6">1.03.2024</span>
<span style="left:451.00px;top:265.69px;font-size:11px;line-height:13px;z-index:6;transform:scaleX(0.940)">Yıldız Nakliyat</span>
<span style="left:524.00px;top:265.69px;font-size:11px;line-height:13px;z-index:6">100.01</span>
<span style="left:761.86px;top:265.69px;font-size:11px;line-height:13px;z-index:6">275,50</span>
<span style="left:867.97px;top:265.69px;font-size:11px;line-height:13px;z-index:6">55,10</span>
<span style="left:961.86px;top:265.69px;font-size:11px;line-height:13px;z-index:6">330,60</span>
<span style="left:1161.86px;top:265.69px;font-size:11px;line-height:13px;z-index:6">275,50</span>
<span style="left:1203.00px;top:265.69px;font-size:11px;line-height:13px;z-index:6">600.20</span>
<span style="left:1367.97px;top:265.69px;font-size:11px;line-height:13px;z-index:6">55,10</span>
<span style="left:1403.00px;top:265.69px;font-size:11px;line-height:13px;z-index:6">391.20</span>
<span style="left:1674.09px;top:265.69px;font-size:11px;line-height:13px;z-index:6">0,00</span>
<span style="left:1703.00px;top:265.69px;font-size:11px;line-height:13px;z-index:6">600.18</span>
<span style="left:1874.09px;top:265.69px;font-size:11px;line-height:13px;z-index:6">0,00</span>
<span style="left:1903.00px;top:265.69px;font-size:11px;line-height:13px;z-index:6">391.20</span>
<span style="left:24.94px;top:265.69px;font-size:11px;line-height:13px;z-index:6">1</span>
<span style="left:48.00px;top:287.69px;font-size:11px;line-height:13px;z-index:6">E-Fatura</span>
<span style="left:148.00px;top:287.69px;font-size:11px;line-height:13px;z-index:6">Satış</span>
<span style="left:248.00px;top:287.69px;font-size:11px;line-height:13px;z-index:6">EF12024001115...</span>
<span style="left:351.00px;top:287.69px;font-size:11px;line-height:13px;z-index:6">4.03.2024</span>
<span style="left:451.00px;top:287.69px;font-size:11px;line-height:13px;z-index:6;transform:scaleX(0.988)">Ahsen Gıd...</span>
<span style="left:524.00px;top:287.69px;font-size:11px;line-height:13px;z-index:6">102.01</span>
<span style="left:761.86px;top:287.69px;font-size:11px;line-height:13px;z-index:6">153,77</span>
<span style="left:867.97px;top:287.69px;font-size:11px;line-height:13px;z-index:6">30,75</span>
<span style="left:961.86px;top:287.69px;font-size:11px;line-height:13px;z-index:6">184,52</span>
<span style="left:1161.86px;top:287.69px;font-size:11px;line-height:13px;z-index:6">153,77</span>
<span style="left:1203.00px;top:287.69px;font-size:11px;line-height:13px;z-index:6">600.20</span>
<span style="left:1367.97px;top:287.69px;font-size:11px;line-height:13px;z-index:6">30,75</span>
<span style="left:1403.00px;top:287.69px;font-size:11px;line-height:13px;z-index:6">391.20</span>
<span style="left:1674.09px;top:287.69px;font-size:11px;line-height:13px;z-index:6">0,00</span>
<span style="left:1703.00px;top:287.69px;font-size:11px;line-height:13px;z-index:6">600.18</span>
<span style="left:1874.09px;top:287.69px;font-size:11px;line-height:13px;z-index:6">0,00</span>
<span style="left:1903.00px;top:287.69px;font-size:11px;line-height:13px;z-index:6">391.20</span>
<span style="left:24.94px;top:287.69px;font-size:11px;line-height:13px;z-index:6">2</span>
<span style="left:48.00px;top:309.69px;font-size:11px;line-height:13px;z-index:6">E-Fatura</span>
<span style="left:148.00px;top:309.69px;font-size:11px;line-height:13px;z-index:6">Satış</span>
<span style="left:248.00px;top:309.69px;font-size:11px;line-height:13px;z-index:6">EF12024001115...</span>
<span style="left:351.00px;top:309.69px;font-size:11px;line-height:13px;z-index:6">4.03.2024</span>
<span style="left:451.00px;top:309.69px;font-size:11px;line-height:13px;z-index:6;transform:scaleX(0.941)">Yıldız Market</span>
<span style="left:746.56px;top:309.69px;font-size:11px;line-height:13px;z-index:6">60.862,78</span>
<span style="left:846.56px;top:309.69px;font-size:11px;line-height:13px;z-index:6">12.172,56</span>
<span style="left:946.56px;top:309.69px;font-size:11px;line-height:13px;z-index:6">73.035,34</span>
<span style="left:1146.56px;top:309.69px;font-size:11px;line-height:13px;z-index:6">60.862,78</span>
<span style="left:1203.00px;top:309.69px;font-size:11px;line-height:13px;z-index:6">600.20</span>
<span style="left:1346.56px;top:309.69px;font-size:11px;line-height:13px;z-index:6">12.172,56</span>
<span style="left:1403.00px;top:309.69px;font-size:11px;line-height:13px;z-index:6">391.20</span>
<span style="left:1674.09px;top:309.69px;font-size:11px;line-height:13px;z-index:6">0,00</span>
<span style="left:1703.00px;top:309.69px;font-size:11px;line-height:13px;z-index:6">600.18</span>
<span style="left:1874.09px;top:309.69px;font-size:11px;line-height:13px;z-index:6">0,00</span>
<span style="left:1903.00px;top:309.69px;font-size:11px;line-height:13px;z-index:6">391.20</span>
<span style="left:24.94px;top:309.69px;font-size:11px;line-height:13px;z-index:6">3</span>
<span style="left:48.00px;top:331.69px;font-size:11px;line-height:13px;z-index:6">E-Fatura</span>
<span style="left:148.00px;top:331.69px;font-size:11px;line-height:13px;z-index:6">Satış</span>
<span style="left:248.00px;top:331.69px;font-size:11px;line-height:13px;z-index:6">EF12024001115...</span>
<span style="left:351.00px;top:331.69px;font-size:11px;line-height:13px;z-index:6">4.03.2024</span>
<span style="left:451.00px;top:331.69px;font-size:11px;line-height:13px;z-index:6;transform:scaleX(1.029)">Güngör Ot...</span>
<span style="left:524.00px;top:331.69px;font-size:11px;line-height:13px;z-index:6">100.01</span>
<span style="left:752.68px;top:331.69px;font-size:11px;line-height:13px;z-index:6">5.407,73</span>
<span style="left:852.68px;top:331.69px;font-size:11px;line-height:13px;z-index:6">1.081,55</span>
<span style="left:952.68px;top:331.69px;font-size:11px;line-height:13px;z-index:6">6.489,28</span>
<span style="left:1152.68px;top:331.69px;font-size:11px;line-height:13px;z-index:6">5.407,73</span>
<span style="left:1203.00px;top:331.69px;font-size:11px;line-height:13px;z-index:6">600.20</span>
<span style="left:1352.68px;top:331.69px;font-size:11px;line-height:13px;z-index:6">1.081,55</span>
<span style="left:1403.00px;top:331.69px;font-size:11px;line-height:13px;z-index:6">391.20</span>
<span style="left:1674.09px;top:331.69px;font-size:11px;line-height:13px;z-index:6">0,00</span>
<span style="left:1703.00px;top:331.69px;font-size:11px;line-height:13px;z-index:6">600.18</span>
<span style="left:1874.09px;top:331.69px;font-size:11px;line-height:13px;z-index:6">0,00</span>
<span style="left:1903.00px;top:331.69px;font-size:11px;line-height:13px;z-index:6">391.20</span>
<span style="left:24.94px;top:331.69px;font-size:11px;line-height:13px;z-index:6">4</span>
<span style="left:48.00px;top:353.69px;font-size:11px;line-height:13px;z-index:6">E-Fatura</span>
<span style="left:148.00px;top:353.69px;font-size:11px;line-height:13px;z-index:6">Satış</span>
<span style="left:248.00px;top:353.69px;font-size:11px;line-height:13px;z-index:6">EF12024001115...</span>
<span style="left:351.00px;top:353.69px;font-size:11px;line-height:13px;z-index:6">4.03.2024</span>
<span style="left:451.00px;top:353.69px;font-size:11px;line-height:13px;z-index:6;transform:scaleX(0.991)">Fırat Halı Ti...</span>
<span style="left:524.00px;top:353.69px;font-size:11px;line-height:13px;z-index:6">100.01</span>
<span style="left:761.86px;top:353.69px;font-size:11px;line-height:13px;z-index:6">304,52</span>
<span style="left:867.97px;top:353.69px;font-size:11px;line-height:13px;z-index:6">60,90</span>
<span style="left:961.86px;top:353.69px;font-size:11px;line-height:13px;z-index:6">365,42</span>
<span style="left:1161.86px;top:353.69px;font-size:11px;line-height:13px;z-index:6">304,52</span>
<span style="left:1203.00px;top:353.69px;font-size:11px;line-height:13px;z-index:6">600.20</span>
<span style="left:1367.97px;top:353.69px;font-size:11px;line-height:13px;z-index:6">60,90</span>
<span style="left:1403.00px;top:353.69px;font-size:11px;line-height:13px;z-index:6">391.20</span>
<span style="left:1674.09px;top:353.69px;font-size:11px;line-height:13px;z-index:6">0,00</span>
<span style="left:1703.00px;top:353.69px;font-size:11px;line-height:13px;z-index:6">600.18</span>
<span style="left:1874.09px;top:353.69px;font-size:11px;line-height:13px;z-index:6">0,00</span>
<span style="left:1903.00px;top:353.69px;font-size:11px;line-height:13px;z-index:6">391.20</span>
<span style="left:24.94px;top:353.69px;font-size:11px;line-height:13px;z-index:6">5</span>
<span style="left:48.00px;top:375.69px;font-size:11px;line-height:13px;z-index:6">E-Fatura</span>
<span style="left:148.00px;top:375.69px;font-size:11px;line-height:13px;z-index:6">Satış</span>
<span style="left:248.00px;top:375.69px;font-size:11px;line-height:13px;z-index:6">EF12024001115...</span>
<span style="left:351.00px;top:375.69px;font-size:11px;line-height:13px;z-index:6">5.03.2024</span>
<span style="left:451.00px;top:375.69px;font-size:11px;line-height:13px;z-index:6">Yorulmaz K...</span>
<span style="left:761.86px;top:375.69px;font-size:11px;line-height:13px;z-index:6">789,70</span>
<span style="left:861.86px;top:375.69px;font-size:11px;line-height:13px;z-index:6">157,94</span>
<span style="left:961.86px;top:375.69px;font-size:11px;line-height:13px;z-index:6">947,64</span>
<span style="left:1161.86px;top:375.69px;font-size:11px;line-height:13px;z-index:6">789,70</span>
<span style="left:1203.00px;top:375.69px;font-size:11px;line-height:13px;z-index:6">600.20</span>
<span style="left:1361.86px;top:375.69px;font-size:11px;line-height:13px;z-index:6">157,94</span>
<span style="left:1403.00px;top:375.69px;font-size:11px;line-height:13px;z-index:6">391.20</span>
<span style="left:1674.09px;top:375.69px;font-size:11px;line-height:13px;z-index:6">0,00</span>
<span style="left:1703.00px;top:375.69px;font-size:11px;line-height:13px;z-index:6">600.18</span>
<span style="left:1874.09px;top:375.69px;font-size:11px;line-height:13px;z-index:6">0,00</span>
<span style="left:1903.00px;top:375.69px;font-size:11px;line-height:13px;z-index:6">391.20</span>
<span style="left:24.94px;top:375.69px;font-size:11px;line-height:13px;z-index:6">6</span>
<span style="left:48.00px;top:397.69px;font-size:11px;line-height:13px;z-index:6">E-Arşiv Fatura</span>
<span style="left:148.00px;top:397.69px;font-size:11px;line-height:13px;z-index:6">Istisna</span>
<span style="left:248.00px;top:397.69px;font-size:11px;line-height:13px;z-index:6">EF12024001115...</span>
<span style="left:351.00px;top:397.69px;font-size:11px;line-height:13px;z-index:6">5.03.2024</span>
<span style="left:451.00px;top:397.69px;font-size:11px;line-height:13px;z-index:6;transform:scaleX(0.968)">Yılmazlar Ti...</span>
<span style="left:524.00px;top:397.69px;font-size:11px;line-height:13px;z-index:6">100.01</span>
<span style="left:761.86px;top:397.69px;font-size:11px;line-height:13px;z-index:6">251,69</span>
<span style="left:874.09px;top:397.69px;font-size:11px;line-height:13px;z-index:6">0,00</span>
<span style="left:961.86px;top:397.69px;font-size:11px;line-height:13px;z-index:6">251,69</span>
<span style="left:1174.09px;top:397.69px;font-size:11px;line-height:13px;z-index:6">0,00</span>
<span style="left:1203.00px;top:397.69px;font-size:11px;line-height:13px;z-index:6">600.20</span>
<span style="left:1374.09px;top:397.69px;font-size:11px;line-height:13px;z-index:6">0,00</span>
<span style="left:1403.00px;top:397.69px;font-size:11px;line-height:13px;z-index:6">391.20</span>
<span style="left:1674.09px;top:397.69px;font-size:11px;line-height:13px;z-index:6">0,00</span>
<span style="left:1703.00px;top:397.69px;font-size:11px;line-height:13px;z-index:6">600.18</span>
<span style="left:1874.09px;top:397.69px;font-size:11px;line-height:13px;z-index:6">0,00</span>
<span style="left:1903.00px;top:397.69px;font-size:11px;line-height:13px;z-index:6">391.20</span>
<span style="left:24.94px;top:397.69px;font-size:11px;line-height:13px;z-index:6">7</span>
<span style="left:48.00px;top:419.69px;font-size:11px;line-height:13px;z-index:6">E-Fatura</span>
<span style="left:148.00px;top:419.69px;font-size:11px;line-height:13px;z-index:6">Istisna</span>
<span style="left:248.00px;top:419.69px;font-size:11px;line-height:13px;z-index:6">EF12024001115...</span>
<span style="left:351.00px;top:419.69px;font-size:11px;line-height:13px;z-index:6">6.03.2024</span>
<span style="left:451.00px;top:419.69px;font-size:11px;line-height:13px;z-index:6;transform:scaleX(0.950)">Akyüz Gıda</span>
<span style="left:524.00px;top:419.69px;font-size:11px;line-height:13px;z-index:6">102.01</span>
<span style="left:761.86px;top:419.69px;font-size:11px;line-height:13px;z-index:6">675,00</span>
<span style="left:874.09px;top:419.69px;font-size:11px;line-height:13px;z-index:6">0,00</span>
<span style="left:961.86px;top:419.69px;font-size:11px;line-height:13px;z-index:6">675,00</span>
<span style="left:1174.09px;top:419.69px;font-size:11px;line-height:13px;z-index:6">0,00</span>
<span style="left:1203.00px;top:419.69px;font-size:11px;line-height:13px;z-index:6">600.20</span>
<span style="left:1374.09px;top:419.69px;font-size:11px;line-height:13px;z-index:6">0,00</span>
<span style="left:1403.00px;top:419.69px;font-size:11px;line-height:13px;z-index:6">391.20</span>
<span style="left:1674.09px;top:419.69px;font-size:11px;line-height:13px;z-index:6">0,00</span>
<span style="left:1703.00px;top:419.69px;font-size:11px;line-height:13px;z-index:6">600.18</span>
<span style="left:1874.09px;top:419.69px;font-size:11px;line-height:13px;z-index:6">0,00</span>
<span style="left:1903.00px;top:419.69px;font-size:11px;line-height:13px;z-index:6">391.20</span>
<span style="left:24.94px;top:419.69px;font-size:11px;line-height:13px;z-index:6">8</span>
<span style="left:48.00px;top:441.69px;font-size:11px;line-height:13px;z-index:6">E-Fatura</span>
<span style="left:148.00px;top:441.69px;font-size:11px;line-height:13px;z-index:6">Istisna</span>
<span style="left:248.00px;top:441.69px;font-size:11px;line-height:13px;z-index:6">EF12024001115...</span>
<span style="left:351.00px;top:441.69px;font-size:11px;line-height:13px;z-index:6">6.03.2024</span>
<span style="left:451.00px;top:441.69px;font-size:11px;line-height:13px;z-index:6;transform:scaleX(1.022)">Bütüner Pa...</span>
<span style="left:524.00px;top:441.69px;font-size:11px;line-height:13px;z-index:6">102.01</span>
<span style="left:761.86px;top:441.69px;font-size:11px;line-height:13px;z-index:6">150,00</span>
<span style="left:874.09px;top:441.69px;font-size:11px;line-height:13px;z-index:6">0,00</span>
<span style="left:961.86px;top:441.69px;font-size:11px;line-height:13px;z-index:6">150,00</span>
<span style="left:1174.09px;top:441.69px;font-size:11px;line-height:13px;z-index:6">0,00</span>
<span style="left:1203.00px;top:441.69px;font-size:11px;line-height:13px;z-index:6">600.20</span>
<span style="left:1374.09px;top:441.69px;font-size:11px;line-height:13px;z-index:6">0,00</span>
<span style="left:1403.00px;top:441.69px;font-size:11px;line-height:13px;z-index:6">391.20</span>
<span style="left:1674.09px;top:441.69px;font-size:11px;line-height:13px;z-index:6">0,00</span>
<span style="left:1703.00px;top:441.69px;font-size:11px;line-height:13px;z-index:6">600.18</span>
<span style="left:1874.09px;top:441.69px;font-size:11px;line-height:13px;z-index:6">0,00</span>
<span style="left:1903.00px;top:441.69px;font-size:11px;line-height:13px;z-index:6">391.20</span>
<span style="left:24.94px;top:441.69px;font-size:11px;line-height:13px;z-index:6">9</span>
<span style="left:48.00px;top:463.69px;font-size:11px;line-height:13px;z-index:6">E-Fatura</span>
<span style="left:148.00px;top:463.69px;font-size:11px;line-height:13px;z-index:6">Istisna</span>
<span style="left:248.00px;top:463.69px;font-size:11px;line-height:13px;z-index:6">EF12024001115...</span>
<span style="left:351.00px;top:463.69px;font-size:11px;line-height:13px;z-index:6">6.03.2024</span>
<span style="left:451.00px;top:463.69px;font-size:11px;line-height:13px;z-index:6;transform:scaleX(0.943)">Polat Gıda</span>
<span style="left:524.00px;top:463.69px;font-size:11px;line-height:13px;z-index:6">100.01</span>
<span style="left:761.86px;top:463.69px;font-size:11px;line-height:13px;z-index:6">150,00</span>
<span style="left:874.09px;top:463.69px;font-size:11px;line-height:13px;z-index:6">0,00</span>
<span style="left:961.86px;top:463.69px;font-size:11px;line-height:13px;z-index:6">150,00</span>
<span style="left:1174.09px;top:463.69px;font-size:11px;line-height:13px;z-index:6">0,00</span>
<span style="left:1203.00px;top:463.69px;font-size:11px;line-height:13px;z-index:6">600.20</span>
<span style="left:1374.09px;top:463.69px;font-size:11px;line-height:13px;z-index:6">0,00</span>
<span style="left:1403.00px;top:463.69px;font-size:11px;line-height:13px;z-index:6">391.20</span>
<span style="left:1674.09px;top:463.69px;font-size:11px;line-height:13px;z-index:6">0,00</span>
<span style="left:1703.00px;top:463.69px;font-size:11px;line-height:13px;z-index:6">600.18</span>
<span style="left:1874.09px;top:463.69px;font-size:11px;line-height:13px;z-index:6">0,00</span>
<span style="left:1903.00px;top:463.69px;font-size:11px;line-height:13px;z-index:6">391.20</span>
<span style="left:21.88px;top:463.69px;font-size:11px;line-height:13px;z-index:6">10</span>
<span style="left:48.00px;top:485.69px;font-size:11px;line-height:13px;z-index:6">E-Fatura</span>
<span style="left:148.00px;top:485.69px;font-size:11px;line-height:13px;z-index:6">Satış</span>
<span style="left:248.00px;top:485.69px;font-size:11px;line-height:13px;z-index:6">EF12024001115...</span>
<span style="left:351.00px;top:485.69px;font-size:11px;line-height:13px;z-index:6">6.03.2024</span>
<span style="left:451.00px;top:485.69px;font-size:11px;line-height:13px;z-index:6;transform:scaleX(0.950)">Deniz Plastik</span>
<span style="left:752.68px;top:485.69px;font-size:11px;line-height:13px;z-index:6">3.416,67</span>
<span style="left:861.86px;top:485.69px;font-size:11px;line-height:13px;z-index:6">683,33</span>
<span style="left:952.68px;top:485.69px;font-size:11px;line-height:13px;z-index:6">4.100,00</span>
<span style="left:1152.68px;top:485.69px;font-size:11px;line-height:13px;z-index:6">3.416,67</span>
<span style="left:1203.00px;top:485.69px;font-size:11px;line-height:13px;z-index:6">600.20</span>
<span style="left:1361.86px;top:485.69px;font-size:11px;line-height:13px;z-index:6">683,33</span>
<span style="left:1403.00px;top:485.69px;font-size:11px;line-height:13px;z-index:6">391.20</span>
<span style="left:1674.09px;top:485.69px;font-size:11px;line-height:13px;z-index:6">0,00</span>
<span style="left:1703.00px;top:485.69px;font-size:11px;line-height:13px;z-index:6">600.18</span>
<span style="left:1874.09px;top:485.69px;font-size:11px;line-height:13px;z-index:6">0,00</span>
<span style="left:1903.00px;top:485.69px;font-size:11px;line-height:13px;z-index:6">391.20</span>
<span style="left:22.29px;top:485.69px;font-size:11px;line-height:13px;z-index:6">11</span>
<span style="left:48.00px;top:507.69px;font-size:11px;line-height:13px;z-index:6">E-Arşiv Fatura</span>
<span style="left:148.00px;top:507.69px;font-size:11px;line-height:13px;z-index:6">Satış</span>
<span style="left:248.00px;top:507.69px;font-size:11px;line-height:13px;z-index:6">EA12024001115...</span>
<span style="left:351.00px;top:507.69px;font-size:11px;line-height:13px;z-index:6">6.03.2024</span>
<span style="left:451.00px;top:507.69px;font-size:11px;line-height:13px;z-index:6;transform:scaleX(0.952)">Kırlangıç Ki...</span>
<span style="left:524.00px;top:507.69px;font-size:11px;line-height:13px;z-index:6">100.01</span>
<span style="left:761.86px;top:507.69px;font-size:11px;line-height:13px;z-index:6">313,14</span>
<span style="left:867.97px;top:507.69px;font-size:11px;line-height:13px;z-index:6">62,63</span>
<span style="left:961.86px;top:507.69px;font-size:11px;line-height:13px;z-index:6">375,77</span>
<span style="left:1161.86px;top:507.69px;font-size:11px;line-height:13px;z-index:6">313,14</span>
<span style="left:1203.00px;top:507.69px;font-size:11px;line-height:13px;z-index:6">600.20</span>
<span style="left:1367.97px;top:507.69px;font-size:11px;line-height:13px;z-index:6">62,63</span>
<span style="left:1403.00px;top:507.69px;font-size:11px;line-height:13px;z-index:6">391.20</span>
<span style="left:1674.09px;top:507.69px;font-size:11px;line-height:13px;z-index:6">0,00</span>
<span style="left:1703.00px;top:507.69px;font-size:11px;line-height:13px;z-index:6">600.18</span>
<span style="left:1874.09px;top:507.69px;font-size:11px;line-height:13px;z-index:6">0,00</span>
<span style="left:1903.00px;top:507.69px;font-size:11px;line-height:13px;z-index:6">391.20</span>
<span style="left:21.88px;top:507.69px;font-size:11px;line-height:13px;z-index:6">12</span>
<span style="left:48.00px;top:529.69px;font-size:11px;line-height:13px;z-index:6">E-Fatura</span>
<span style="left:148.00px;top:529.69px;font-size:11px;line-height:13px;z-index:6">Satış</span>
<span style="left:248.00px;top:529.69px;font-size:11px;line-height:13px;z-index:6">EF12024001115...</span>
<span style="left:351.00px;top:529.69px;font-size:11px;line-height:13px;z-index:6">6.03.2024</span>
<span style="left:451.00px;top:529.69px;font-size:11px;line-height:13px;z-index:6;transform:scaleX(1.042)">Durgun İnş...</span>
<span style="left:524.00px;top:529.69px;font-size:11px;line-height:13px;z-index:6">100.01</span>
<span style="left:761.86px;top:529.69px;font-size:11px;line-height:13px;z-index:6">901,67</span>
<span style="left:861.86px;top:529.69px;font-size:11px;line-height:13px;z-index:6">180,33</span>
<span style="left:952.68px;top:529.69px;font-size:11px;line-height:13px;z-index:6">1.082,00</span>
<span style="left:1161.86px;top:529.69px;font-size:11px;line-height:13px;z-index:6">901,67</span>
<span style="left:1203.00px;top:529.69px;font-size:11px;line-height:13px;z-index:6">600.20</span>
<span style="left:1361.86px;top:529.69px;font-size:11px;line-height:13px;z-index:6">180,33</span>
<span style="left:1403.00px;top:529.69px;font-size:11px;line-height:13px;z-index:6">391.20</span>
<span style="left:1674.09px;top:529.69px;font-size:11px;line-height:13px;z-index:6">0,00</span>
<span style="left:1703.00px;top:529.69px;font-size:11px;line-height:13px;z-index:6">600.18</span>
<span style="left:1874.09px;top:529.69px;font-size:11px;line-height:13px;z-index:6">0,00</span>
<span style="left:1903.00px;top:529.69px;font-size:11px;line-height:13px;z-index:6">391.20</span>
<span style="left:21.88px;top:529.69px;font-size:11px;line-height:13px;z-index:6">13</span>
<span style="left:48.00px;top:551.69px;font-size:11px;line-height:13px;z-index:6">E-Fatura</span>
<span style="left:148.00px;top:551.69px;font-size:11px;line-height:13px;z-index:6">Satış</span>
<span style="left:248.00px;top:551.69px;font-size:11px;line-height:13px;z-index:6">EF12024001115...</span>
<span style="left:351.00px;top:551.69px;font-size:11px;line-height:13px;z-index:6">7.03.2024</span>
<span style="left:451.00px;top:551.69px;font-size:11px;line-height:13px;z-index:6;transform:scaleX(1.010)">Kaptan Ma...</span>
<span style="left:524.00px;top:551.69px;font-size:11px;line-height:13px;z-index:6">102.01</span>
<span style="left:746.56px;top:551.69px;font-size:11px;line-height:13px;z-index:6">51.478,63</span>
<span style="left:846.56px;top:551.69px;font-size:11px;line-height:13px;z-index:6">10.295,73</span>
<span style="left:946.56px;top:551.69px;font-size:11px;line-height:13px;z-index:6">61.774,36</span>
<span style="left:1146.56px;top:551.69px;font-size:11px;line-height:13px;z-index:6">51.478,63</span>
<span style="left:1203.00px;top:551.69px;font-size:11px;line-height:13px;z-index:6">600.20</span>
<span style="left:1346.56px;top:551.69px;font-size:11px;line-height:13px;z-index:6">10.295,73</span>
<span style="left:1403.00px;top:551.69px;font-size:11px;line-height:13px;z-index:6">391.20</span>
<span style="left:1674.09px;top:551.69px;font-size:11px;line-height:13px;z-index:6">0,00</span>
<span style="left:1703.00px;top:551.69px;font-size:11px;line-height:13px;z-index:6">600.18</span>
<span style="left:1874.09px;top:551.69px;font-size:11px;line-height:13px;z-index:6">0,00</span>
<span style="left:1903.00px;top:551.69px;font-size:11px;line-height:13px;z-index:6">391.20</span>
<span style="left:21.88px;top:551.69px;font-size:11px;line-height:13px;z-index:6">14</span>
<span style="left:21.88px;top:573.69px;font-size:11px;line-height:13px;z-index:6">15</span>
<span style="left:6.90px;top:996.84px;font-size:12px;line-height:14px;z-index:5;transform:scaleX(0.912)">Fatura Sayısı:14</span>
<span style="left:101.70px;top:996.84px;font-size:12px;line-height:14px;z-index:5;transform:scaleX(0.919);color:#fff">Bakiye:0,00</span>
<span style="left:173.50px;top:996.84px;font-size:12px;line-height:14px;z-index:5;transform:scaleX(0.951)">Kdv Hariç Toplam:125.130,80</span>
<span style="left:337.70px;top:996.84px;font-size:12px;line-height:14px;z-index:5;transform:scaleX(0.942)">Toplam Kdv:24.780,82</span>
<span style="left:463.75px;top:996.84px;font-size:12px;line-height:14px;z-index:5;transform:scaleX(0.948)">Diğer Vergiler:0,00</span>
<span style="left:572.10px;top:996.84px;font-size:12px;line-height:14px;z-index:5;transform:scaleX(0.943)">Genel Toplam:149.911,62</span>
<span style="left:1671.40px;top:988.00px;font-size:13px;line-height:15px;z-index:5;transform:scaleX(0.950);font-weight:bold;color:#fff">DIŞARI AKTAR - F2</span>
<span style="left:1814.30px;top:988.00px;font-size:13px;line-height:15px;z-index:5;transform:scaleX(0.925);font-weight:bold;color:#fff">VAZGEÇ - ESC</span>
<span style="left:6.25px;top:1021.84px;font-size:12px;line-height:14px;z-index:5;transform:scaleX(0.860)">DEBUG</span>
<span style="left:54.20px;top:1021.84px;font-size:12px;line-height:14px;z-index:5;transform:scaleX(0.925)">Versiyon : 5.1.0.0</span>
</body></html>
